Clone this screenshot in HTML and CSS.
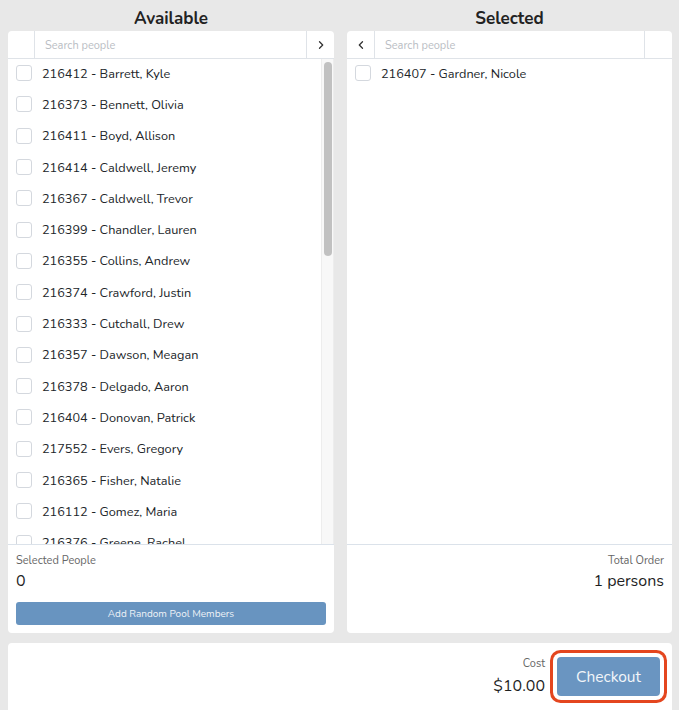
FILE: index.html
```html
<!DOCTYPE html>
<html lang="en">
<head>
<meta charset="utf-8">
<title>Select People</title>
<link rel="stylesheet" href="styles.css">
</head>
<body>
<div class="columns">
  <section class="col">
    <h2 class="col-title">Available</h2>
    <div class="panel">
      <div class="search-bar">
        <div class="cell cell-left"></div>
        <input class="search" type="text" placeholder="Search people">
        <div class="cell cell-right">
          <svg width="10" height="10" viewBox="0 0 10 10"><path d="M3.5 1.8 L6.7 5 L3.5 8.2" fill="none" stroke="#333" stroke-width="1.3" stroke-linecap="round" stroke-linejoin="round"/></svg>
        </div>
      </div>
      <div class="list-wrap">
        <ul class="list">
          <li class="row"><span class="box"></span>216412 - Barrett, Kyle</li>
          <li class="row"><span class="box"></span>216373 - Bennett, Olivia</li>
          <li class="row"><span class="box"></span>216411 - Boyd, Allison</li>
          <li class="row"><span class="box"></span>216414 - Caldwell, Jeremy</li>
          <li class="row"><span class="box"></span>216367 - Caldwell, Trevor</li>
          <li class="row"><span class="box"></span>216399 - Chandler, Lauren</li>
          <li class="row"><span class="box"></span>216355 - Collins, Andrew</li>
          <li class="row"><span class="box"></span>216374 - Crawford, Justin</li>
          <li class="row"><span class="box"></span>216333 - Cutchall, Drew</li>
          <li class="row"><span class="box"></span>216357 - Dawson, Meagan</li>
          <li class="row"><span class="box"></span>216378 - Delgado, Aaron</li>
          <li class="row"><span class="box"></span>216404 - Donovan, Patrick</li>
          <li class="row"><span class="box"></span>217552 - Evers, Gregory</li>
          <li class="row"><span class="box"></span>216365 - Fisher, Natalie</li>
          <li class="row"><span class="box"></span>216112 - Gomez, Maria</li>
          <li class="row"><span class="box"></span>216376 - Greene, Rachel</li>
        </ul>
        <div class="scrollbar"><div class="thumb"></div></div>
      </div>
      <div class="panel-foot">
        <div class="foot-label">Selected People</div>
        <div class="foot-value">0</div>
        <button class="btn-random" type="button">Add Random Pool Members</button>
      </div>
    </div>
  </section>
  <section class="col">
    <h2 class="col-title">Selected</h2>
    <div class="panel">
      <div class="search-bar">
        <div class="cell cell-left cell-btn">
          <svg width="10" height="10" viewBox="0 0 10 10"><path d="M6.5 1.8 L3.3 5 L6.5 8.2" fill="none" stroke="#333" stroke-width="1.3" stroke-linecap="round" stroke-linejoin="round"/></svg>
        </div>
        <input class="search" type="text" placeholder="Search people">
        <div class="cell cell-right"></div>
      </div>
      <div class="list-wrap">
        <ul class="list">
          <li class="row"><span class="box"></span>216407 - Gardner, Nicole</li>
        </ul>
      </div>
      <div class="panel-foot foot-right">
        <div class="foot-label">Total Order</div>
        <div class="foot-value">1 persons</div>
      </div>
    </div>
  </section>
</div>
<div class="checkout-bar">
  <div class="cost">
    <div class="cost-label">Cost</div>
    <div class="cost-value">$10.00</div>
  </div>
  <button class="btn-checkout" type="button">Checkout</button>
</div>
</body>
</html>
```

FILE: styles.css
```css
* { box-sizing: border-box; }
html, body { margin: 0; padding: 0; }
body {
  background: #e8e8e8;
  font-family: "Nunito", "Lato", "Noto Sans", sans-serif;
  color: #212529;
  height: 710px;
  overflow: hidden;
}
.columns {
  display: grid;
  grid-template-columns: 326px 325px;
  column-gap: 13px;
  padding: 7px 7px 0 8px;
}
.col { display: flex; flex-direction: column; }
.col-title {
  margin: 0;
  font-size: 17px;
  font-weight: 700;
  line-height: 24px;
  text-align: center;
  color: #222;
}
.panel {
  background: #fff;
  border-radius: 4px;
  height: 602px;
  display: flex;
  flex-direction: column;
  overflow: hidden;
}
.search-bar {
  display: flex;
  height: 28px;
  border-bottom: 1px solid #dfe3e8;
  flex: none;
}
.cell {
  width: 27px;
  flex: none;
  display: flex;
  align-items: center;
  justify-content: center;
}
.cell-left { border-right: 1px solid #dfe3e8; }
.cell-right { border-left: 1px solid #dfe3e8; width: 28px; }
.cell-btn { width: 28px; }
.search {
  flex: 1;
  min-width: 0;
  border: 0;
  outline: none;
  padding: 1px 10px 0;
  font-family: inherit;
  font-size: 11px;
  color: #333;
  background: transparent;
}
.search::placeholder { color: #b9bdc3; }
.list-wrap {
  display: flex;
  height: 485px;
  flex: none;
}
.list {
  list-style: none;
  margin: 0;
  padding: 0;
  flex: 1;
  min-width: 0;
  overflow: hidden;
}
.scrollbar {
  width: 13px;
  flex: none;
  background: #f8f8f8;
  border-left: 1px solid #ededed;
  border-right: 1px solid #ededed;
  padding: 3px 1px 0 2px;
}
.thumb {
  width: 8px;
  height: 194px;
  background: #c1c1c1;
  border-radius: 4px;
}
.row {
  display: flex;
  align-items: center;
  height: 31.3px;
  padding: 0 0 3px 8px;
  font-size: 12.7px;
  color: #212529;
  white-space: nowrap;
}
.box {
  width: 16px;
  height: 16px;
  border: 1px solid #d4d8de;
  border-radius: 3px;
  margin-right: 10px;
  flex: none;
}
.panel-foot {
  flex: none;
  height: 89px;
  border-top: 1px solid #dbe2ea;
  padding: 8px 8px 8px 8px;
  display: flex;
  flex-direction: column;
}
.foot-right { align-items: flex-end; }
.foot-label {
  font-size: 11px;
  line-height: 16px;
  color: #666;
}
.foot-value {
  font-size: 16px;
  line-height: 22px;
  margin-top: 1px;
  color: #1f1f1f;
}
.btn-random {
  margin-top: 10px;
  height: 23px;
  width: 100%;
  border: 0;
  border-radius: 3px;
  background: #6894c0;
  color: #eef2f7;
  font-family: inherit;
  font-size: 10px;
  padding: 0;
}
.checkout-bar {
  margin: 10px 7px 0 8px;
  height: 67px;
  background: #fff;
  border-radius: 4px 4px 0 0;
  display: flex;
  justify-content: flex-end;
  align-items: flex-start;
  padding: 14px 12px 0 0;
  gap: 12px;
}
.cost {
  text-align: right;
  margin-top: -1px;
}
.cost-label {
  font-size: 11px;
  line-height: 16px;
  color: #666;
}
.cost-value {
  font-size: 16px;
  line-height: 22px;
  margin-top: 3px;
  color: #1f1f1f;
}
.btn-checkout {
  width: 103px;
  height: 39px;
  border: 0;
  border-radius: 4px;
  background: #6a95c1;
  color: #f2f5f9;
  font-family: inherit;
  font-size: 15.5px;
  padding: 0;
  box-shadow: 0 0 0 4px #fff, 0 0 0 7px #e4461f;
}
```
